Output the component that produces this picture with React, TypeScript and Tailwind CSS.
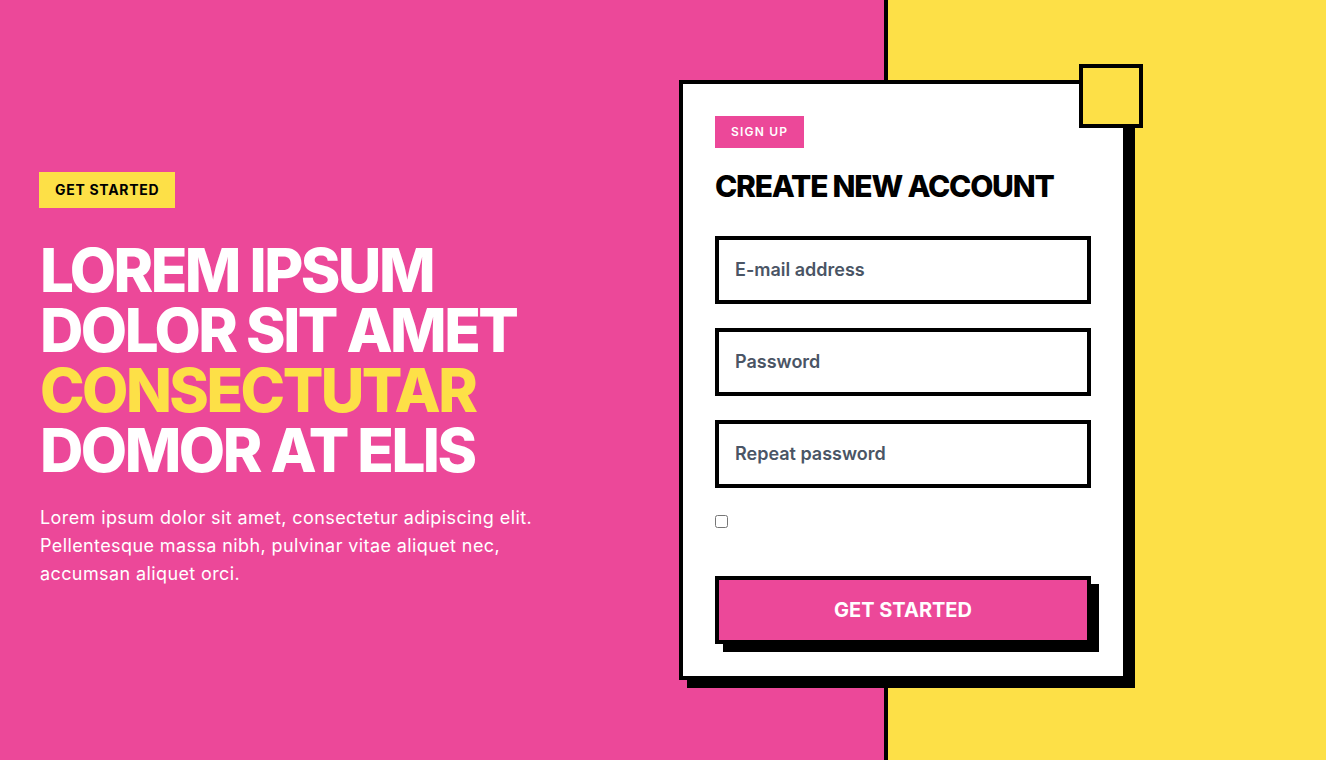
import React from "react";

export default function App() {
  return (
    <div
      className="min-h-screen w-full flex items-center bg-[linear-gradient(90deg,#ec4899_884px,#000_884px,#000_888px,#fde047_888px)]"
      style={{ fontFamily: "Inter, 'Noto Sans', sans-serif" }}
    >
      <div className="w-full grid grid-cols-2 gap-8 px-10 items-center">
        {/* Left side copy */}
        <div>
          <span className="-ml-px inline-block bg-[#fde047] px-4 py-2 text-sm font-bold tracking-wider text-black">
            GET STARTED
          </span>
          <h1 className="mt-8 text-6xl leading-none font-extrabold text-white tracking-[-0.042em]">
            LOREM IPSUM
            <br />
            DOLOR SIT AMET
            <br />
            <span className="text-[#fde047]">CONSECTUTAR</span>
            <br />
            DOMOR AT ELIS
          </h1>
          <p className="mt-6 text-lg leading-7 text-white tracking-[0.022em]">
            Lorem ipsum dolor sit amet, consectetur adipiscing elit.
            <br />
            Pellentesque massa nibh, pulvinar vitae aliquet nec,
            <br />
            accumsan aliquet orci.
          </p>
        </div>

        {/* Sign up card */}
        <div className="w-full max-w-md">
          <div className="relative bg-white border-4 border-black p-8 shadow-[8px_8px_0_0_#000]">
            <div className="absolute -top-5 -right-5 w-16 h-16 bg-[#fde047] border-4 border-black" />
            <span className="inline-block bg-[#ec4899] px-4 py-2 text-xs leading-4 font-semibold tracking-widest text-white">
              SIGN UP
            </span>
            <h2 className="mt-5 text-3xl font-extrabold text-black tracking-[-0.04em]">
              CREATE NEW ACCOUNT
            </h2>
            <form className="mt-8 flex flex-col gap-6" onSubmit={(e) => e.preventDefault()}>
              <input
                type="email"
                placeholder="E-mail address"
                className="w-full border-4 border-black px-4 py-4 text-lg leading-7 font-semibold text-gray-700 placeholder:text-gray-600 outline-none"
              />
              <input
                type="password"
                placeholder="Password"
                className="w-full border-4 border-black px-4 py-4 text-lg leading-7 font-semibold text-gray-700 placeholder:text-gray-600 outline-none"
              />
              <input
                type="password"
                placeholder="Repeat password"
                className="w-full border-4 border-black px-4 py-4 text-lg leading-7 font-semibold text-gray-700 placeholder:text-gray-600 outline-none"
              />
              <div className="mt-[3px] h-[13px]">
                <input type="checkbox" className="block w-[13px] h-[13px]" />
              </div>
              <button
                type="submit"
                className="mt-6 w-full bg-[#ec4899] border-4 border-black py-4 text-xl leading-7 font-bold text-white shadow-[8px_8px_0_0_#000]"
              >
                GET STARTED
              </button>
            </form>
          </div>
        </div>
      </div>
    </div>
  );
}
